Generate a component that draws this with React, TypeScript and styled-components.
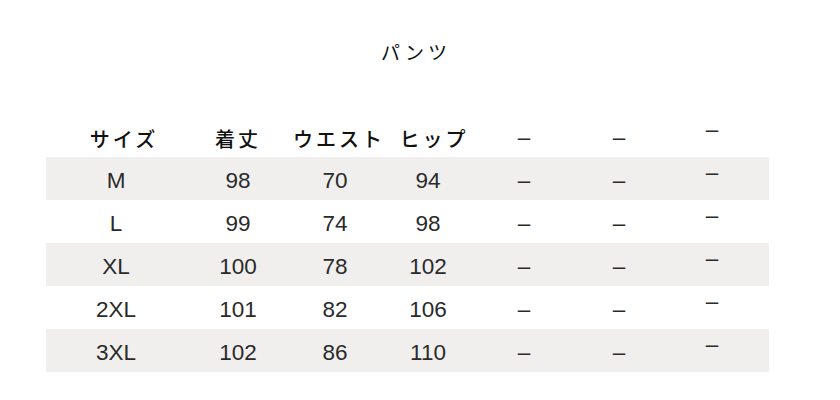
import React from "react";
import styled, { createGlobalStyle } from "styled-components";

const Global = createGlobalStyle`
  html, body { margin: 0; padding: 0; background: #ffffff; }
  body { width: 840px; height: 400px; overflow: hidden; }
`;

const Page = styled.div`
  width: 840px;
  height: 400px;
  display: flex;
  flex-direction: column;
  align-items: flex-start;
  background: #fff;
`;

const Title = styled.h1`
  margin: 38px 0 49px 0;
  align-self: stretch;
  text-align: center;
  font-family: "Noto Sans CJK JP", sans-serif;
  font-weight: 400;
  font-size: 19px;
  line-height: 28px;
  letter-spacing: 4px;
  padding-right: 8px;
  color: #111;
`;

const Table = styled.div`
  margin-left: 46px;
  width: 723px;
  display: flex;
  flex-direction: column;
`;

const Row = styled.div<{ $shaded?: boolean; $header?: boolean }>`
  display: grid;
  grid-template-columns: 140px 104px 90px 96px 96px 94px 92px 1fr;
  height: ${(p) => (p.$header ? "42px" : "43px")};
  background: ${(p) => (p.$shaded ? "#f0efee" : "transparent")};
`;

const Cell = styled.div<{ $shift?: number; $raised?: boolean; $header?: boolean }>`
  display: flex;
  align-items: center;
  justify-content: center;
  box-sizing: border-box;
  padding-left: ${(p) => (p.$shift ? p.$shift * 2 : 0)}px;
  padding-top: ${(p) => (p.$raised ? 0 : 4)}px;
  padding-bottom: ${(p) => (p.$raised ? 12 : 0)}px;
  font-family: ${(p) =>
    p.$header
      ? '"Noto Sans CJK JP", sans-serif'
      : '"Liberation Sans", Arial, sans-serif'};
  font-size: ${(p) => (p.$header ? "20px" : "22.5px")};
  letter-spacing: ${(p) => (p.$header ? "3px" : "0")};
  font-weight: ${(p) => (p.$header ? 500 : 400)};
  color: ${(p) => (p.$header ? "#111" : "#2a2a2a")};
  white-space: nowrap;
`;

const headers: { label: string; shift: number }[] = [
  { label: "サイズ", shift: 8 },
  { label: "着丈", shift: 0 },
  { label: "ウエスト", shift: 4 },
  { label: "ヒップ", shift: 6 },
];

const rows = [
  ["M", "98", "70", "94"],
  ["L", "99", "74", "98"],
  ["XL", "100", "78", "102"],
  ["2XL", "101", "82", "106"],
  ["3XL", "102", "86", "110"],
];

const DASH = "–";

export default function App() {
  return (
    <Page>
      <Global />
      <Title>パンツ</Title>
      <Table>
        <Row $header>
          {headers.map((h) => (
            <Cell key={h.label} $header $shift={h.shift}>
              {h.label}
            </Cell>
          ))}
          <Cell>{DASH}</Cell>
          <Cell>{DASH}</Cell>
          <Cell $raised>{DASH}</Cell>
          <div />
        </Row>
        {rows.map((r, i) => (
          <Row key={r[0]} $shaded={i % 2 === 0}>
            {r.map((v, j) => (
              <Cell key={j}>{v}</Cell>
            ))}
            <Cell>{DASH}</Cell>
            <Cell>{DASH}</Cell>
            <Cell $raised>{DASH}</Cell>
            <div />
          </Row>
        ))}
      </Table>
    </Page>
  );
}
